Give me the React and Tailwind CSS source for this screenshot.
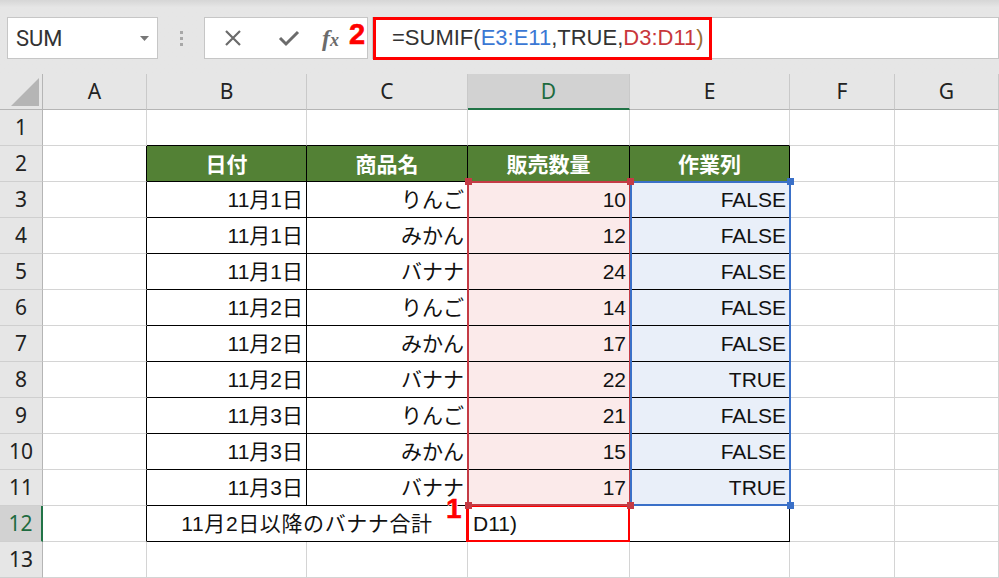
import React from "react";

const COLS = ["A", "B", "C", "D", "E", "F", "G"];
const data = [
  ["11月1日", "りんご", "10", "FALSE"],
  ["11月1日", "みかん", "12", "FALSE"],
  ["11月1日", "バナナ", "24", "FALSE"],
  ["11月2日", "りんご", "14", "FALSE"],
  ["11月2日", "みかん", "17", "FALSE"],
  ["11月2日", "バナナ", "22", "TRUE"],
  ["11月3日", "りんご", "21", "FALSE"],
  ["11月3日", "みかん", "15", "FALSE"],
  ["11月3日", "バナナ", "17", "TRUE"],
];

const font = { fontFamily: '"Liberation Sans", "Noto Sans CJK JP", sans-serif' };

function inTable(r, c) {
  return r >= 2 && r <= 12 && c >= 1 && c <= 4;
}

function Cell({ r, c }) {
  const rightBlack = inTable(r, c) || inTable(r, c + 1);
  const bottomBlack = inTable(r, c) || inTable(r + 1, c);
  let bg = "bg-white";
  let content = null;
  let align = "justify-end pr-[3px]";
  let text = "text-[#111]";
  let style = undefined;
  if (r === 2 && c >= 1 && c <= 4) {
    bg = "bg-[#538135]";
    content = ["日付", "商品名", "販売数量", "作業列"][c - 1];
    align = "justify-center";
    text = "text-white font-bold";
    style = { fontFamily: '"Noto Sans CJK JP", sans-serif' };
  } else if (r >= 3 && r <= 11 && c >= 1 && c <= 4) {
    content = data[r - 3][c - 1];
    if (c === 3) bg = "bg-[#fbeaea]";
    if (c === 4) bg = "bg-[#e9eff9]";
  }
  return (
    <div
      className={`relative flex items-center h-[36px] border-r border-b ${
        rightBlack ? "border-r-black" : "border-r-[#d4d4d4]"
      } ${bottomBlack ? "border-b-black" : "border-b-[#d4d4d4]"} ${bg} ${align} ${text} text-[21px] leading-none whitespace-nowrap`}
      style={style}
    >
      {content}
    </div>
  );
}

function Handle({ className }) {
  return <div className={`absolute w-[7px] h-[7px] ${className}`} />;
}

export default function App() {
  const rows = [];
  for (let r = 1; r <= 13; r++) rows.push(r);
  return (
    <div className="w-[999px] h-[578px] overflow-hidden bg-white relative" style={font}>
      {/* toolbar */}
      <div className="h-[74px] bg-gradient-to-b from-[#d6d6d6] via-[#e6e6e6] via-[10%] to-[#e6e6e6] flex items-start pt-[17px] relative">
        <div className="ml-[7px] w-[151px] h-[42px] bg-white border border-[#c6c6c6] flex items-center pl-[8px] pr-[8px] justify-between">
          <span className="text-[22px] text-[#333]" style={{ fontFamily: "Roboto, 'Noto Sans', sans-serif" }}>
            SUM
          </span>
          <svg width="9" height="5" viewBox="0 0 9 5">
            <polygon points="0,0 9,0 4.5,5" fill="#777" />
          </svg>
        </div>
        <div className="w-[46px] h-[42px] flex flex-col items-center justify-center gap-[3px]">
          <div className="w-[3px] h-[3px] bg-[#a8a8a8]" />
          <div className="w-[3px] h-[3px] bg-[#a8a8a8]" />
          <div className="w-[3px] h-[3px] bg-[#a8a8a8]" />
        </div>
        <div className="w-[164px] h-[42px] bg-white border border-[#c6c6c6] flex items-center relative">
          <svg className="ml-[18px]" width="20" height="20" viewBox="0 0 20 20">
            <path d="M3 3 L17 17 M17 3 L3 17" stroke="#6b6b6b" strokeWidth="2.2" fill="none" />
          </svg>
          <svg className="ml-[35px]" width="22" height="20" viewBox="0 0 22 20">
            <path d="M2 10 L8 16 L20 4" stroke="#6b6b6b" strokeWidth="3" fill="none" />
          </svg>
          <span
            className="ml-[22px] text-[24px] italic text-[#6b6b6b] font-bold leading-none"
            style={{ fontFamily: "'Liberation Serif', serif" }}
          >
            f<span className="text-[18px]">x</span>
          </span>
          <span
            className="absolute left-[144px] top-[2px] text-[29px] font-bold text-[#ff0000] leading-none"
            style={{ fontFamily: "'Liberation Sans', Arial, sans-serif", WebkitTextStroke: "0.6px #ff0000" }}
          >
            2
          </span>
        </div>
        <div className="ml-[4px] flex-1 h-[42px] bg-white border border-[#c6c6c6] relative">
          <div className="absolute left-[0px] top-[-1px] w-[339px] h-[43px] border-[3px] border-[#ff0000]" />
          <div
            className="absolute left-[19px] top-0 h-full flex items-center text-[22px] leading-none text-[#333]"
            style={{ fontFamily: "'Liberation Sans', sans-serif" }}
          >
            <span>=SUMIF(</span>
            <span className="text-[#3b78d4]">E3:E11</span>
            <span>,TRUE,</span>
            <span className="text-[#c8373c]">D3:D11</span>
            <span className="text-[#9a7034]">)</span>
          </div>
        </div>
      </div>

      {/* grid */}
      <div className="grid grid-cols-[43px_104px_160px_161px_162px_160px_105px_104px] relative">
        {/* header row */}
        <div className="h-[36px] bg-[#e6e6e6] border-r border-r-[#b5b5b5] border-b border-b-[#b5b5b5] relative">
          <svg className="absolute right-[3px] bottom-[3px]" width="28" height="28" viewBox="0 0 28 28">
            <polygon points="28,0 28,28 0,28" fill="#b5b5b5" />
          </svg>
        </div>
        {COLS.map((c) => (
          <div
            key={c}
            className={`h-[36px] flex items-center justify-center text-[21px] leading-none border-r border-r-[#c9c9c9] ${
              c === "D"
                ? "bg-[#d2d2d2] text-[#1e6b3f] border-b-2 border-b-[#217346]"
                : "bg-[#e6e6e6] text-[#222] border-b border-b-[#b5b5b5]"
            }`}
            style={{ fontFamily: "'Noto Sans', sans-serif" }}
          >
            {c}
          </div>
        ))}
        {rows.map((r) => (
          <React.Fragment key={r}>
            <div
              className={`h-[36px] flex items-center justify-center text-[21px] leading-none border-b border-b-[#cfcfcf] ${
                r === 12
                  ? "bg-[#d2d2d2] text-[#1e6b3f] border-r-2 border-r-[#217346]"
                  : "bg-[#e6e6e6] text-[#222] border-r border-r-[#b5b5b5]"
              }`}
              style={{ fontFamily: "'Noto Sans', sans-serif" }}
            >
              {r}
            </div>
            {r === 12 ? (
              <>
                <Cell r={12} c={0} />
                <div className="col-span-2 h-[36px] flex items-center justify-center border-r border-b border-r-black border-b-black text-[21px] leading-none text-[#111] whitespace-nowrap tracking-[0.6px]">
                  11月2日以降のバナナ合計
                </div>
                <div className="relative h-[36px] flex items-center pl-[5px] border-r border-b border-r-black border-b-black bg-white text-[21px] leading-none text-[#111]">
                  <span>D11)</span>
                  <div className="absolute left-[-2px] top-[-2px] w-[165px] h-[39px] border-[3px] border-[#ff0000]" />
                  <span
                    className="absolute left-[-22px] top-[-11px] text-[28px] font-bold text-[#ff0000] leading-none"
                    style={{
                      fontFamily: "'Liberation Sans', Arial, sans-serif",
                      WebkitTextStroke: "0.5px #ff0000",
                      textShadow: "1px 0 #fff, -1px 0 #fff, 0 1px #fff, 0 -1px #fff",
                    }}
                  >
                    1
                  </span>
                </div>
                <Cell r={12} c={4} />
                <Cell r={12} c={5} />
                <Cell r={12} c={6} />
              </>
            ) : (
              COLS.map((c, ci) => <Cell key={c} r={r} c={ci} />)
            )}
          </React.Fragment>
        ))}

        {/* range highlights */}
        <div className="absolute left-[467px] top-[107px] w-[164px] h-[325px] border-2 border-[#c43b45] pointer-events-none" />
        <div className="absolute left-[630px] top-[107px] w-[161px] h-[325px] border-2 border-[#3a70c8] pointer-events-none" />
        <Handle className="left-[465px] top-[104px] bg-[#c43b45]" />
        <Handle className="left-[627px] top-[104px] bg-[#c43b45]" />
        <Handle className="left-[465px] top-[428px] bg-[#c43b45]" />
        <Handle className="left-[627px] top-[428px] bg-[#c43b45]" />
        <Handle className="left-[787px] top-[104px] bg-[#3a70c8]" />
        <Handle className="left-[787px] top-[428px] bg-[#3a70c8]" />
      </div>
    </div>
  );
}
